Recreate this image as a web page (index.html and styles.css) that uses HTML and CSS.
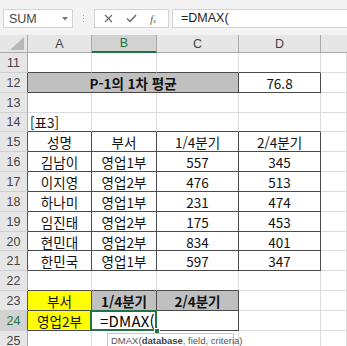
FILE: index.html
```html
<!DOCTYPE html>
<html lang="ko">
<head>
<meta charset="utf-8">
<link rel="stylesheet" href="styles.css">
</head>
<body>
<div class="app">
  <div class="toolbar">
    <div class="namebox"><span>SUM</span><svg class="dd" width="6" height="4" viewBox="0 0 6 4"><polygon points="0,0 6,0 3,3.5" fill="#777"/></svg></div>
    <div class="grip"><i></i><i></i><i></i></div>
    <div class="btns">
      <svg width="9" height="9" viewBox="0 0 9 9"><path d="M1 1 L8 8 M8 1 L1 8" stroke="#666" stroke-width="1.1" fill="none"/></svg>
      <svg width="11" height="9" viewBox="0 0 11 9"><path d="M1 4.5 L4 7.5 L10 1" stroke="#666" stroke-width="1.4" fill="none"/></svg>
      <span class="fx">f<small>x</small></span>
    </div>
    <div class="fbar">=DMAX(</div>
  </div>
  <div class="sheet">
    <div class="h corner"><svg width="14" height="13" viewBox="0 0 14 13"><polygon points="14,0 14,13 0,13" fill="#b7b7b7"/></svg></div>
    <div class="h">A</div>
    <div class="h sel">B</div>
    <div class="h">C</div>
    <div class="h">D</div>
    <div class="h last"></div>

    <div class="rh">11</div><div class="c db"></div><div class="c db"></div><div class="c db"></div><div class="c db"></div><div class="c"></div>

    <div class="rh dk">12</div><div class="c m3 gray b dr db">P-1의 1차 평균</div><div class="c dr db">76.8</div><div class="c"></div>

    <div class="rh">13</div><div class="c"></div><div class="c"></div><div class="c"></div><div class="c"></div><div class="c"></div>

    <div class="rh">14</div><div class="c db left">[표3]</div><div class="c db"></div><div class="c db"></div><div class="c db"></div><div class="c"></div>

    <div class="rh dk">15</div><div class="c dr db">성명</div><div class="c dr db">부서</div><div class="c dr db">1/4분기</div><div class="c dr db">2/4분기</div><div class="c"></div>
    <div class="rh dk">16</div><div class="c dr db">김남이</div><div class="c dr db">영업1부</div><div class="c dr db">557</div><div class="c dr db">345</div><div class="c"></div>
    <div class="rh dk">17</div><div class="c dr db">이지영</div><div class="c dr db">영업2부</div><div class="c dr db">476</div><div class="c dr db">513</div><div class="c"></div>
    <div class="rh dk">18</div><div class="c dr db">하나미</div><div class="c dr db">영업1부</div><div class="c dr db">231</div><div class="c dr db">474</div><div class="c"></div>
    <div class="rh dk">19</div><div class="c dr db">임진태</div><div class="c dr db">영업2부</div><div class="c dr db">175</div><div class="c dr db">453</div><div class="c"></div>
    <div class="rh dk">20</div><div class="c dr db">현민대</div><div class="c dr db">영업2부</div><div class="c dr db">834</div><div class="c dr db">401</div><div class="c"></div>
    <div class="rh dk">21</div><div class="c dr db">한민국</div><div class="c dr db">영업1부</div><div class="c dr db">597</div><div class="c dr db">347</div><div class="c"></div>

    <div class="rh">22</div><div class="c db"></div><div class="c db"></div><div class="c db"></div><div class="c"></div><div class="c"></div>

    <div class="rh dk">23</div><div class="c yellow dr db">부서</div><div class="c gray b dr db">1/4분기</div><div class="c gray b dr db">2/4분기</div><div class="c"></div><div class="c"></div>

    <div class="rh act">24</div><div class="c yellow dr db">영업2부</div><div class="c active db"><span class="entry">=DMAX(</span><span class="caret"></span><span class="handle"></span></div><div class="c dr db"></div><div class="c"></div><div class="c"></div>

    <div class="rh">25</div><div class="c"></div><div class="c tipcell"><div class="tip">DMAX(<b>database</b>, field, criteria)</div></div><div class="c"></div><div class="c"></div><div class="c"></div>
  </div>
</div>
</body>
</html>
```

FILE: styles.css
```css
* { box-sizing: border-box; }
html, body { margin: 0; padding: 0; background: #fff; }
body { width: 347px; height: 346px; overflow: hidden; font-family: "Noto Sans CJK KR", "Noto Sans", sans-serif; }

.app { width: 347px; height: 346px; display: flex; flex-direction: column; overflow: hidden; }

.toolbar {
  height: 35px;
  background: #f3f3f3;
  display: flex;
  align-items: flex-start;
  padding-top: 9px;
  flex: none;
}
.namebox {
  margin-left: 3px;
  width: 70px;
  height: 19px;
  background: #fff;
  border: 1px solid #d4d4d4;
  display: flex;
  align-items: center;
  justify-content: space-between;
  padding: 0 3px 0 5px;
  font-family: "Liberation Sans", sans-serif;
  font-size: 12.5px;
  color: #444;
}
.dd { margin-right: 1px; }
.grip {
  width: 21px;
  height: 19px;
  display: flex;
  flex-direction: column;
  align-items: center;
  justify-content: center;
  gap: 2px;
}
.grip i { display: block; width: 1px; height: 1px; background: #aaa; }
.btns {
  width: 75px;
  height: 19px;
  background: #fff;
  border: 1px solid #d4d4d4;
  display: flex;
  align-items: center;
  padding-left: 9px;
  gap: 13px;
}
.fx { font-family: "Liberation Serif", serif; font-style: italic; font-size: 11px; color: #666; }
.fx small { font-size: 7px; }
.fbar {
  margin-left: 3px;
  flex: 1;
  height: 19px;
  background: #fff;
  border: 1px solid #d4d4d4;
  border-right: none;
  padding-left: 8px;
  font-family: "Liberation Sans", sans-serif;
  font-size: 12.5px;
  color: #222;
  line-height: 17px;
}

.sheet {
  flex: 1;
  display: grid;
  grid-template-columns: 28px 64px 65px 82px 82px 1fr;
  grid-template-rows: 18px repeat(15, 19.857px);
  font-size: 13.5px;
  color: #111;
}
.h {
  background: #e6e6e6;
  border-right: 1px solid #ababab;
  border-bottom: 1px solid #ababab;
  display: flex;
  align-items: center;
  justify-content: center;
  font-family: "Liberation Sans", sans-serif;
  font-size: 12.5px;
  color: #444;
}
.h.last { border-right: none; }
.h.corner { justify-content: flex-end; align-items: flex-end; padding: 0 3px 2px 0; }
.h.sel { background: #d2d2d2; color: #217346; border-bottom: 2px solid #217346; }

.rh {
  background: #e6e6e6;
  border-right: 1px solid #ababab;
  border-bottom: 1px solid #d0d0d0;
  display: flex;
  align-items: center;
  justify-content: center;
  font-family: "Liberation Sans", sans-serif;
  font-size: 12.5px;
  color: #444;
  padding-top: 1px;
}
.rh.dk { border-right-color: #555; }
.rh.act { background: #d2d2d2; color: #217346; border-right: 1px solid #217346; }

.c {
  border-right: 1px solid #dcdcdc;
  border-bottom: 1px solid #dcdcdc;
  display: flex;
  align-items: center;
  justify-content: center;
  white-space: nowrap;
  line-height: 18px;
  padding-top: 1px;
}
.c.left { justify-content: flex-start; padding-left: 2px; }
.dr { border-right-color: #4a4a4a; }
.db { border-bottom-color: #4a4a4a; }
.m3 { grid-column: span 3; }
.gray { background: #c0c0c0; }
.yellow { background: #ffff00; }
.b { font-weight: bold; }

.c.active { position: relative; justify-content: flex-start; padding-left: 8px; }
.active::after {
  content: "";
  position: absolute;
  left: -2px; top: -1px; right: -1px; bottom: -1px;
  border: 2px solid #217346;
  pointer-events: none;
}
.entry { font-size: 15px; color: #000; letter-spacing: 0.2px; }
.caret { display: inline-block; width: 1px; height: 15px; background: #000; margin-left: 1px; }
.handle {
  position: absolute;
  right: -4px; bottom: -4px;
  width: 6px; height: 6px;
  background: #217346;
  border: 1px solid #fff;
  z-index: 2;
}

.tipcell { position: relative; overflow: visible; }
.tip {
  position: absolute;
  left: 15px; top: 2px;
  width: 127px;
  height: 16px;
  background: #fff;
  border: 1px solid #c6c6c6;
  font-family: "Liberation Sans", sans-serif;
  font-size: 9.5px;
  color: #555;
  padding-left: 3px;
  line-height: 13px;
  z-index: 3;
}
.tip b { font-weight: bold; color: #444; }
```
